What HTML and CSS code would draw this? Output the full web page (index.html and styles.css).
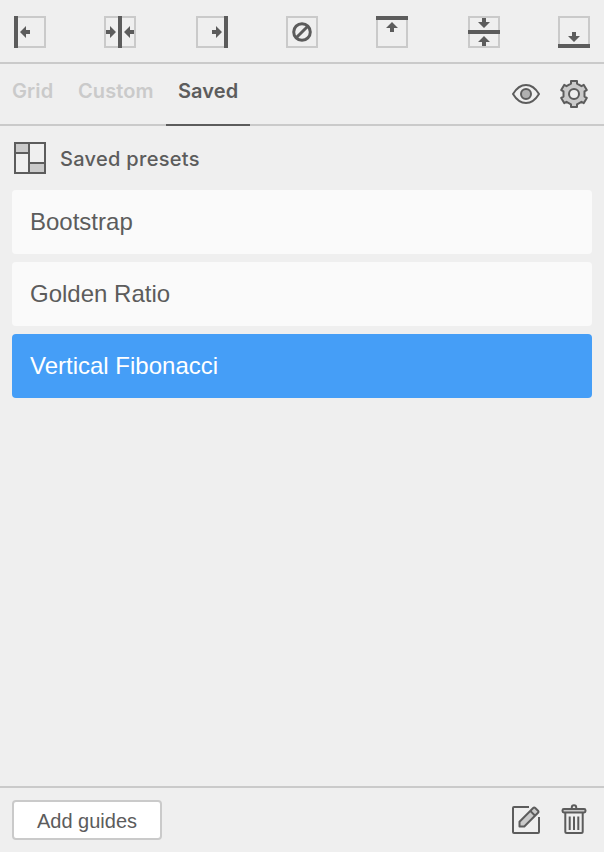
FILE: index.html
```html
<!DOCTYPE html>
<html lang="en">
<head>
    <meta charset="UTF-8">
    <meta name="viewport" content="width=device-width, initial-scale=1.0">
    <title>Guides</title>
    <link rel="stylesheet" href="styles.css">
</head>
<body>
    <svg class="defs" width="0" height="0">
        <!-- arrow pointing left, 10x12, tip at 0,0 -->
        <path id="arrow" d="M0 0L6 -6V-2H10V2H6V6Z"/>
    </svg>

    <main class="panel">
        <div class="toolbar">
            <button class="tool" title="Left">
                <svg viewBox="0 0 32 32">
                    <rect class="box" x="1" y="1" width="30" height="30"/>
                    <rect class="bar" width="4" height="32"/>
                    <use class="bar" href="#arrow" transform="translate(6 16)"/>
                </svg>
            </button>
            <button class="tool" title="Vertical center">
                <svg viewBox="0 0 32 32">
                    <rect class="box" x="1" y="1" width="30" height="30"/>
                    <rect class="bar" x="14" width="4" height="32"/>
                    <use class="bar" href="#arrow" transform="translate(12 16) rotate(180)"/>
                    <use class="bar" href="#arrow" transform="translate(20 16)"/>
                </svg>
            </button>
            <button class="tool shift" title="Right">
                <svg viewBox="0 0 32 32">
                    <rect class="box" x="1" y="1" width="30" height="30"/>
                    <rect class="bar" x="28" width="4" height="32"/>
                    <use class="bar" href="#arrow" transform="translate(26 16) rotate(180)"/>
                </svg>
            </button>
            <button class="tool" title="Clear">
                <svg viewBox="0 0 32 32">
                    <rect class="box" x="1" y="1" width="30" height="30"/>
                    <g class="clear">
                        <circle cx="16" cy="16" r="8.3"/>
                        <path d="M10.2 21.8L21.8 10.2"/>
                    </g>
                </svg>
            </button>
            <button class="tool" title="Top">
                <svg viewBox="0 0 32 32">
                    <rect class="box" x="1" y="1" width="30" height="30"/>
                    <rect class="bar" width="32" height="4"/>
                    <use class="bar" href="#arrow" transform="translate(16 6) rotate(90)"/>
                </svg>
            </button>
            <button class="tool shift" title="Horizontal center">
                <svg viewBox="0 0 32 32">
                    <rect class="box" x="1" y="1" width="30" height="30"/>
                    <rect class="bar" y="14" width="32" height="4"/>
                    <use class="bar" href="#arrow" transform="translate(16 12) rotate(-90)"/>
                    <use class="bar" href="#arrow" transform="translate(16 20) rotate(90)"/>
                </svg>
            </button>
            <button class="tool" title="Bottom">
                <svg viewBox="0 0 32 32">
                    <rect class="box" x="1" y="1" width="30" height="30"/>
                    <rect class="bar" y="28" width="32" height="4"/>
                    <use class="bar" href="#arrow" transform="translate(16 26) rotate(-90)"/>
                </svg>
            </button>
        </div>

        <nav class="tabs">
            <a class="tab tab-grid">Grid</a>
            <a class="tab tab-custom">Custom</a>
            <a class="tab tab-saved active">Saved</a>
            <div class="actions">
                <svg class="icon" viewBox="-16 -16 32 32">
                    <path class="line" d="M-13 0C-9.5 -5.8 -5 -9 0 -9S9.5 -5.8 13 0C9.5 5.8 5 9 0 9S-9.5 5.8 -13 0Z"/>
                    <circle class="line pupil" r="5"/>
                </svg>
                <svg class="icon" viewBox="-16 -16 32 32">
                    <path class="line fill" d="M-3 -10.4V-13H3V-10.4L7.5 -7.8L9.8 -9.1L12.8 -3.9L10.5 -2.6V2.6L12.8 3.9L9.8 9.1L7.5 7.8L3 10.4V13H-3V10.4L-7.5 7.8L-9.8 9.1L-12.8 3.9L-10.5 2.6V-2.6L-12.8 -3.9L-9.8 -9.1L-7.5 -7.8Z"/>
                    <circle class="line hole" r="5"/>
                </svg>
            </div>
        </nav>

        <section class="presets">
            <h2 class="heading">
                <svg class="icon" viewBox="0 0 32 32">
                    <path class="shade" d="M2 2H14V10H2ZM16 22H30V30H16Z"/>
                    <path class="line sharp" d="M1 1H31V31H1ZM15 1V31M1 11H15M15 21H31"/>
                </svg>
                <span>Saved presets</span>
            </h2>
            <ul class="list">
                <li class="item">Bootstrap</li>
                <li class="item">Golden Ratio</li>
                <li class="item selected">Vertical Fibonacci</li>
            </ul>
        </section>

        <footer class="footer">
            <button class="add">Add guides</button>
            <div class="actions">
                <svg class="icon" viewBox="0 0 32 32">
                    <path class="line" d="M19 3H4Q3 3 3 4V28Q3 29 4 29H28Q29 29 29 28V13"/>
                    <path class="line fill" d="M9.5 22.5V17.7L23.2 4Q24.2 3 25.2 4L28 6.8Q29 7.8 28 8.8L14.3 22.5Z"/>
                    <path class="line" d="M20.3 6.9L25.1 11.7"/>
                </svg>
                <svg class="icon" viewBox="0 0 32 32">
                    <path class="line" d="M13.8 5V3.2Q13.8 1.2 16 1.2T18.2 3.2V5"/>
                    <path class="line" d="M7.3 9V27.5Q7.3 29 8.8 29H23.2Q24.7 29 24.7 27.5V9M11.7 12.5V26M16 12.5V26M20.3 12.5V26"/>
                    <rect class="line fill" x="4.5" y="5" width="23" height="3.4" rx="1.4"/>
                </svg>
            </div>
        </footer>
    </main>
</body>
</html>
```
FILE: styles.css
```css
:root {
    --dark: #5c5c5c;
    --light: #cacaca;
    --bg: #efefef;
    --blue: #459ef7;
}
* {
    box-sizing: border-box;
}
body {
    margin: 0;
    background: var(--bg);
    color: var(--dark);
    font-family: "Liberation Sans", Arial, sans-serif;
}
.defs {
    display: none;
}
.panel {
    display: flex;
    flex-direction: column;
    height: 100vh;
}

/* toolbar */
.toolbar {
    display: flex;
    gap: 58px;
    height: 64px;
    padding: 16px 14px 0;
    border-bottom: 2px solid var(--light);
}
.tool {
    width: 32px;
    height: 32px;
    padding: 0;
    border: none;
    background: none;
}
.tool.shift {
    margin-left: 2px;
}
.tool svg {
    display: block;
}
.box {
    fill: none;
    stroke: var(--light);
    stroke-width: 2;
}
.bar {
    fill: var(--dark);
}
.clear {
    fill: none;
    stroke: var(--dark);
    stroke-width: 3;
}

/* icons */
.icon {
    display: block;
    width: 32px;
    height: 32px;
}
.line {
    fill: none;
    stroke: var(--dark);
    stroke-width: 2;
    stroke-linejoin: round;
}
.sharp {
    stroke-linejoin: miter;
}
.fill,
.shade {
    fill: var(--light);
}
.pupil {
    fill: #b0b0b0;
}
.hole {
    fill: var(--bg);
}
.actions {
    display: flex;
    gap: 16px;
    margin-left: auto;
}

/* tabs */
.tabs {
    display: flex;
    height: 62px;
    padding-right: 14px;
    border-bottom: 2px solid var(--light);
}
.tabs .actions {
    padding-top: 14px;
}
.tab {
    height: 62px;
    padding: 0 12px;
    color: var(--light);
    font: 600 20px/54px Inter, sans-serif;
    letter-spacing: 0.1px;
    white-space: nowrap;
}
.tab-grid {
    width: 66px;
}
.tab-custom {
    width: 100px;
}
.tab-saved {
    width: 84px;
}
.tab.active {
    color: var(--dark);
    border-bottom: 2px solid var(--dark);
}

/* presets */
.presets {
    flex: 1;
    padding: 16px 12px 0;
}
.heading {
    display: flex;
    gap: 14px;
    height: 32px;
    margin: 0 0 16px;
    padding-left: 2px;
    font: 500 20px/34px Inter, sans-serif;
    letter-spacing: 0.3px;
}
.list {
    display: grid;
    gap: 8px;
    margin: 0;
    padding: 0;
    list-style: none;
}
.item {
    height: 64px;
    padding: 0 18px;
    border-radius: 4px;
    background: #fafafa;
    font-size: 24px;
    line-height: 64px;
}
.item.selected {
    background: var(--blue);
    color: #fff;
}

/* footer */
.footer {
    display: flex;
    height: 66px;
    padding: 12px 14px 0 12px;
    border-top: 2px solid var(--light);
}
.footer .actions {
    padding-top: 4px;
}
.add {
    width: 150px;
    height: 40px;
    padding: 2px 0 0;
    border: 2px solid var(--light);
    border-radius: 4px;
    background: #fff;
    color: var(--dark);
    font: 20px "Liberation Sans", Arial, sans-serif;
}
```
